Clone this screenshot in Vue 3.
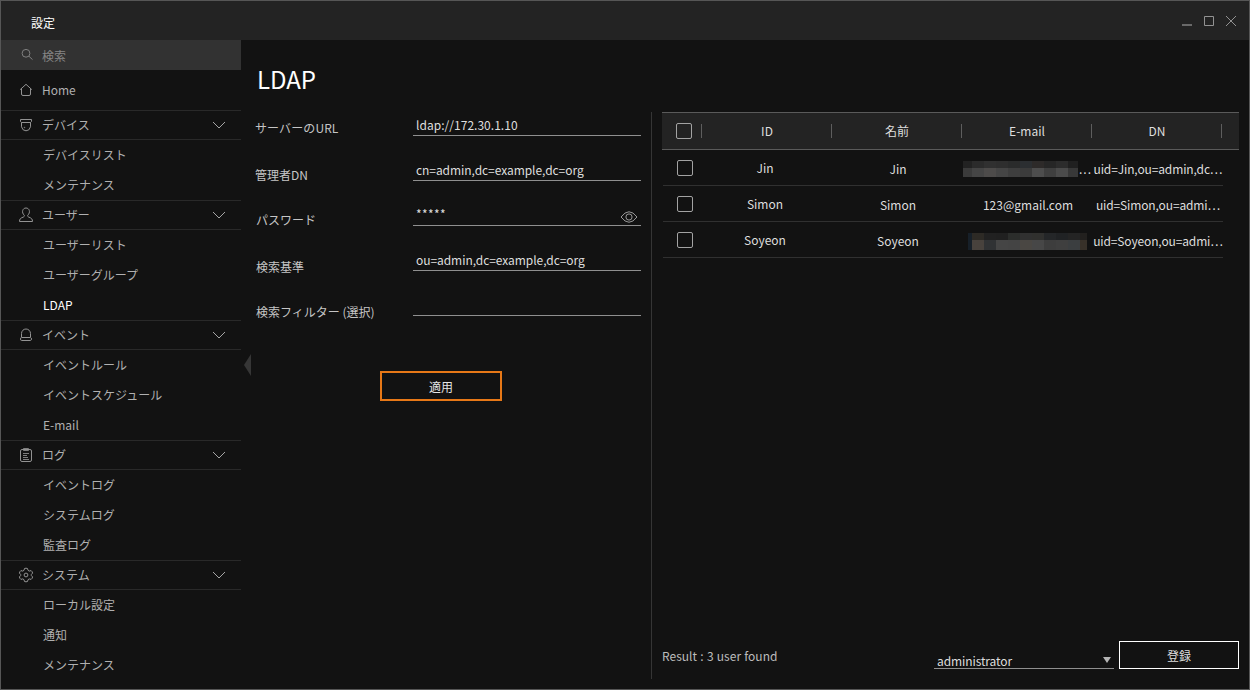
<script setup>
const groups = [
  { icon: 'device', label: 'デバイス', items: ['デバイスリスト', 'メンテナンス'] },
  { icon: 'user', label: 'ユーザー', items: ['ユーザーリスト', 'ユーザーグループ', 'LDAP'] },
  { icon: 'event', label: 'イベント', items: ['イベントルール', 'イベントスケジュール', 'E-mail'] },
  { icon: 'log', label: 'ログ', items: ['イベントログ', 'システムログ', '監査ログ'] },
  { icon: 'system', label: 'システム', items: ['ローカル設定', '通知', 'メンテナンス'] },
]
const active = 'LDAP'
const fields = [
  { key: 'url', label: 'サーバーのURL', value: 'ldap://172.30.1.10' },
  { key: 'dn', label: '管理者DN', value: 'cn=admin,dc=example,dc=org' },
  { key: 'pw', label: 'パスワード', value: '*****', secret: true },
  { key: 'base', label: '検索基準', value: 'ou=admin,dc=example,dc=org' },
  { key: 'filter', label: '検索フィルター (選択)', value: '' },
]
const columns = ['ID', '名前', 'E-mail', 'DN']
const rows = [
  {
    id: 'Jin', dn: 'uid=Jin,ou=admin,dc…',
    mask: {
      cls: 'mask-a', tail: true,
      edges: [0, 9, 21, 33, 45, 57, 69, 81, 93, 105, 115], split: 7, height: 16,
      top: ['#222', '#2b2b2b', '#303030', '#2e2e2e', '#2a2b2b', '#2b2e31', '#2d2a29', '#262626', '#2c2c2c', '#202020'],
      bottom: ['#3b3b3b', '#454545', '#4d4b4a', '#454545', '#3e3e3e', '#3b3b3b', '#4d4d4d', '#3f3f3f', '#4b4b4b', '#383838'],
    },
  },
  { id: 'Simon', email: '123@gmail.com', dn: 'uid=Simon,ou=admi…' },
  {
    id: 'Soyeon', dn: 'uid=Soyeon,ou=admi…',
    mask: {
      cls: 'mask-b',
      edges: [0, 4, 16, 28, 40, 52, 64, 76, 88, 100, 112, 119], split: 7, height: 17,
      top: ['#172029', '#2d2a25', '#212121', '#202020', '#2b2d2b', '#303030', '#30302e', '#242628', '#202224', '#242424', '#22201e'],
      bottom: ['#172029', '#48423d', '#303234', '#454545', '#444', '#4a4743', '#474747', '#3d3d3d', '#3f3f3f', '#3b3e40', '#383129'],
    },
  },
]
</script>

<template>
  <div class="window">
    <header class="titlebar">
      <span class="title">設定</span>
      <svg class="controls" width="60" height="16" viewBox="0 0 60 16">
        <path d="M2 11h10v2H2z" fill="#696969" />
        <path d="M24.500 3.500h9v9h-9z" fill="none" stroke="#929292" />
        <path d="M46 3l10 10M56 3L46 13" fill="none" stroke="#929292" />
      </svg>
    </header>

    <div class="body">
      <nav class="sidebar">
        <div class="search">
          <svg class="nav-icon" width="16" height="16" viewBox="0 0 16 16"><circle cx="8" cy="6.300" r="3.900" /><path d="M11 9.300l3.500 3.300" /></svg>
          <span>検索</span>
        </div>
        <div class="home">
          <svg class="nav-icon" width="16" height="16" viewBox="0 0 16 16"><path d="M2.200 7.600L8 2.300l5.800 5.300M3.500 6.500V12q0 1.500 1.500 1.500h6q1.500 0 1.500-1.500V6.500" /></svg>
          <span>Home</span>
        </div>
        <section v-for="g in groups" :key="g.icon">
          <div class="group">
            <svg class="nav-icon" width="16" height="16" viewBox="0 0 16 16">
              <g v-if="g.icon === 'device'"><path d="M2.500 2.500h11v2l-1 1h-9l-1-1zM3.500 5.500v4.300q1 4 4.500 4t4.500-4V5.500" /><circle cx="6.500" cy="10.500" r=".3" /></g>
              <g v-else-if="g.icon === 'user'"><path d="M6.300 8.300C3.200 5.500 4.500 1 8 1s4.800 4.500 1.700 7.300c-.3 1 .3 1.500 1.300 1.900 2.700 1 3.500 2 3.500 4.300h-13c0-2.300.8-3.300 3.500-4.300 1-.4 1.600-.9 1.300-1.900z" /></g>
              <g v-else-if="g.icon === 'event'"><path d="M3.500 10V6.500a4.500 4.500 0 0 1 9 0V10M3.500 10.500h9q1 .3 1 1.500t-1 1.500h-9q-1 0-1-1.500t1-1.500z" /></g>
              <g v-else-if="g.icon === 'log'"><rect x="2.500" y="2.500" width="11" height="12" rx="1.500" /><path d="M5.500 1.500h5v2h-5zM5 6.500h6M5 8.500h4M5 10.500h5M5 12.500h6" stroke-opacity=".85" /></g>
              <g v-else><path d="M6.500 1.500q1.500-.6 3 0l.5 1.800 1.200.8 1.900-.5q1.300 1 1.500 2.500L13.300 7.500v1l1.300 1.400q-.2 1.500-1.500 2.500l-1.900-.5-1.200.8-.5 1.800q-1.500.6-3 0L6 12.700l-1.200-.8-1.900.5q-1.300-1-1.500-2.500l1.300-1.400v-1L1.400 6.100q.2-1.500 1.500-2.500l1.900.5L6 3.300z" /><circle cx="8" cy="8" r="1.900" /></g>
            </svg>
            <span>{{ g.label }}</span>
            <svg class="chevron" width="14" height="8" viewBox="0 0 14 8"><path d="M1 1l6 6 6-6" /></svg>
          </div>
          <div v-for="item in g.items" :key="item" class="item" :class="{ active: item === active }">{{ item }}</div>
        </section>
      </nav>

      <div class="gutter"><i class="collapse"></i></div>

      <main class="content">
        <h1>LDAP</h1>
        <div class="panels">
          <form class="form" @submit.prevent>
            <div v-for="f in fields" :key="f.key" class="field">
              <label :class="'label-' + f.key">{{ f.label }}</label>
              <div class="input" :class="'input-' + f.key">
                <span>{{ f.value }}</span>
                <svg v-if="f.secret" class="eye" width="18" height="12" viewBox="0 0 18 12"><path d="M1 6Q9-4.500 17 6Q9 16.500 1 6z" /><circle cx="9" cy="6" r="3.100" /></svg>
              </div>
            </div>
            <button type="button" class="apply">適用</button>
          </form>

          <section class="results">
            <div class="thead">
              <span class="check"><i></i></span>
              <span v-for="c in columns" :key="c" class="th">{{ c }}</span>
            </div>
            <div v-for="r in rows" :key="r.id" class="row">
              <span class="check"><i></i></span>
              <span class="td id">{{ r.id }}</span>
              <span class="td name">{{ r.id }}</span>
              <span class="td email" :class="{ masked: r.mask }">
                <template v-if="r.mask">
                  <svg :class="r.mask.cls" :width="r.mask.edges[r.mask.edges.length - 1]" :height="r.mask.height">
                    <template v-for="(x, i) in r.mask.edges.slice(0, -1)" :key="x">
                      <rect :x="x" y="0" :width="r.mask.edges[i + 1] - x" :height="r.mask.split" :fill="r.mask.top[i]" />
                      <rect :x="x" :y="r.mask.split" :width="r.mask.edges[i + 1] - x" :height="r.mask.height - r.mask.split" :fill="r.mask.bottom[i]" />
                    </template>
                  </svg>
                  <span v-if="r.mask.tail" class="tail">...</span>
                </template>
                <template v-else>{{ r.email }}</template>
              </span>
              <span class="td dn">{{ r.dn }}</span>
            </div>
            <footer class="footer">
              <span class="count">Result : 3 user found</span>
              <div class="select"><span>administrator</span><i></i></div>
              <button type="button" class="register">登録</button>
            </footer>
          </section>
        </div>
      </main>
    </div>
  </div>
</template>

<style>
body { margin: 0; background: #121212; }
</style>

<style scoped>
* { box-sizing: border-box; }
.window { width: 1250px; height: 690px; border: 1px solid #565656; background: #121212; color: #dedede; font: 12px/20px "Noto Sans CJK JP", sans-serif; display: flex; flex-direction: column; overflow: hidden; white-space: nowrap; }
.titlebar { height: 39px; flex: none; background: #232323; display: flex; justify-content: space-between; padding: 12px 9px 0 30px; }
.title { color: #fff; }
.body { flex: 1; display: flex; min-height: 0; }
.sidebar { width: 240px; flex: none; color: #b0b0b0; }
.search, .home, .group { display: flex; align-items: center; padding-left: 17px; }
.search { height: 30px; background: #323232; color: #858585; }
.search span { padding-top: 2px; }
.home { height: 40px; }
.group { height: 30px; border-top: 1px solid #292929; border-bottom: 1px solid #292929; }
.nav-icon { margin-right: 8px; fill: none; stroke: #929292; stroke-width: 1; }
.search .nav-icon { stroke: #808080; }
.chevron { margin-left: auto; margin-right: 15px; fill: none; stroke: #a5a5a5; }
.item { height: 30px; line-height: 30px; padding: 0 0 0 42px; }
.item.active { color: #fff; }
.gutter { width: 10px; flex: none; display: flex; align-items: flex-start; padding: 314px 0 0 3px; }
.collapse { border: solid transparent; border-width: 11px 7px 11px 0; border-right-color: #363636; }
.content { flex: 1; min-width: 0; display: flex; flex-direction: column; }
h1 { margin: 0; height: 72px; padding: 24px 0 0 6px; font-size: 24px; line-height: 30px; font-weight: 400; color: #fff; }
.panels { flex: 1; display: flex; min-height: 0; }
.form { width: 401px; height: 567px; flex: none; border-right: 1px solid #353535; display: flex; flex-direction: column; }
.field { height: 45px; flex: none; display: flex; align-items: flex-end; justify-content: space-between; padding-right: 10px; }
.field:first-child { height: 24px; }
label { color: #c5c5c5; padding-left: 4px; margin-bottom: -2px; }
.label-url { letter-spacing: .1px; }
.label-dn { margin-bottom: -4px; }
.label-pw { padding-left: 5px; margin-bottom: -4px; }
.label-base, .label-filter { padding-left: 5px; margin-bottom: -6px; }
.input { width: 228px; height: 24px; border-bottom: 1px solid #8f8f8f; padding: 3px 3px 0 3px; display: flex; justify-content: space-between; align-items: flex-start; letter-spacing: -.06px; }
.input-url { letter-spacing: .03px; }
.input-pw { letter-spacing: .4px; padding-top: 2px; }
.eye { margin-top: 7px; fill: none; stroke: #9a9a9a; }
button { font: inherit; background: none; padding: 2px 0 0; }
.apply { width: 122px; height: 30px; flex: none; border: 2px solid #e77817; color: #e6e6e6; margin: 55px 0 0 129px; }
.results { flex: 1; padding: 0 10px; min-width: 0; display: flex; flex-direction: column; }
.thead { height: 38px; flex: none; background: #232323; border-top: 1px solid #5a5a5a; border-bottom: 1px solid #5a5a5a; display: flex; align-items: center; }
.check { width: 40px; height: 14px; display: flex; align-items: center; padding-left: 14px; flex: none; }
.check i { width: 16px; height: 16px; border: 1px solid #a3a3a3; border-radius: 2px; flex: none; }
.thead .check, .th { border-right: 1px solid #5e5e5e; }
.th { width: 130px; height: 14px; line-height: 14px; padding-left: 1px; text-align: center; }
.row { height: 36px; flex: none; width: 560px; margin-left: 1px; border-bottom: 1px solid #303030; display: flex; align-items: center; }
.td { width: 130px; flex: none; text-align: center; padding-top: 3px; }
.td.id { width: 124px; padding-top: 1px; }
.td.name { width: 142px; }
.td.email { width: 130px; margin-left: -6px; }
.td.masked { display: flex; align-items: center; }
.td.dn { width: 132px; margin-left: -1px; letter-spacing: -.13px; }
.mask-a { flex: none; }
.mask-b { flex: none; margin-left: 5px; }
.tail { letter-spacing: 1px; margin-left: 1px; }
.footer { margin-top: auto; height: 48px; display: flex; align-items: flex-start; flex: none; }
.count { flex: 1; color: #bcbcbc; padding-top: 5px; word-spacing: .6px; }
.select { width: 180px; height: 28px; border-bottom: 1px solid #8f8f8f; display: flex; justify-content: space-between; padding: 10px 3px 0 3px; letter-spacing: -.1px; }
.select i { width: 8px; height: 6px; margin-top: 6px; background: #b4b4b4; clip-path: polygon(0 0, 100% 0, 50% 100%); }
.register { width: 120px; height: 28px; border: 1px solid #fff; color: #ddd; margin-left: 5px; }
</style>
